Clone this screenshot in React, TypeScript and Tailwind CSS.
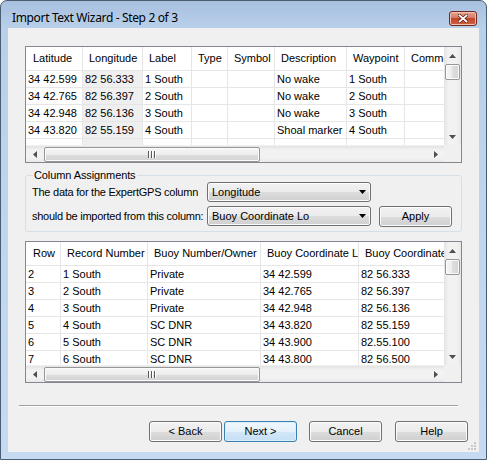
import React from 'react';

type Col = { label: string; w: string; shade?: boolean };

const topCols: Col[] = [
  { label: 'Latitude', w: 'w-[57px]' },
  { label: 'Longitude', w: 'w-[60px]', shade: true },
  { label: 'Label', w: 'w-[49px]' },
  { label: 'Type', w: 'w-[36px]' },
  { label: 'Symbol', w: 'w-[47px]' },
  { label: 'Description', w: 'w-[72px]' },
  { label: 'Waypoint', w: 'w-[58px]' },
  { label: 'Comment', w: 'w-[80px]' },
];

const topRows = [
  ['34 42.599', '82 56.333', '1 South', '', '', 'No wake', '1 South', ''],
  ['34 42.765', '82 56.397', '2 South', '', '', 'No wake', '2 South', ''],
  ['34 42.948', '82 56.136', '3 South', '', '', 'No wake', '3 South', ''],
  ['34 43.820', '82 55.159', '4 South', '', '', 'Shoal marker', '4 South', ''],
  ['', '', '', '', '', '', '', ''],
];

const bottomCols: Col[] = [
  { label: 'Row', w: 'w-[35px]' },
  { label: 'Record Number', w: 'w-[87px]' },
  { label: 'Buoy Number/Owner', w: 'w-[113px]' },
  { label: 'Buoy Coordinate Lat', w: 'w-[98px]' },
  { label: 'Buoy Coordinate Lon', w: 'w-[110px]' },
];

const bottomRows = [
  ['2', '1 South', 'Private', '34 42.599', '82 56.333'],
  ['3', '2 South', 'Private', '34 42.765', '82 56.397'],
  ['4', '3 South', 'Private', '34 42.948', '82 56.136'],
  ['5', '4 South', 'SC DNR', '34 43.820', '82 55.159'],
  ['6', '5 South', 'SC DNR', '34 43.900', '82.55.100'],
  ['7', '6 South', 'SC DNR', '34 43.800', '82 56.500'],
];

function VScroll() {
  return (
    <div className="flex w-[17px] shrink-0 flex-col bg-[linear-gradient(90deg,#e3e3e3,#f2f2f2_25%,#f2f2f2_75%,#e8e8e8)]">
      <div className="flex h-[17px] items-center justify-center">
        <svg width="7" height="4" viewBox="0 0 7 4">
          <path d="M0 4L3.5 0L7 4Z" fill="#4f4f4f" />
        </svg>
      </div>
      <div className="mx-auto h-[16px] w-[15px] rounded-[2px] border border-[#979797] bg-[linear-gradient(90deg,#f6f6f6,#ececec_50%,#dedede_50%,#d4d4d4)] shadow-[inset_0_0_0_1px_#fbfbfb]" />
      <div className="flex-1" />
      <div className="flex h-[17px] items-center justify-center">
        <svg width="7" height="4" viewBox="0 0 7 4">
          <path d="M0 0H7L3.5 4Z" fill="#4f4f4f" />
        </svg>
      </div>
    </div>
  );
}

function HScroll() {
  return (
    <div className="flex flex-1 bg-[linear-gradient(#e3e3e3,#f2f2f2_25%,#f2f2f2_75%,#e8e8e8)]">
      <div className="flex w-[17px] items-center justify-center">
        <svg width="4" height="7" viewBox="0 0 4 7">
          <path d="M4 0V7L0 3.5Z" fill="#4f4f4f" />
        </svg>
      </div>
      <div className="my-auto ml-[1px] flex h-[15px] w-[216px] items-center justify-center rounded-[2px] border border-[#979797] bg-[linear-gradient(#f6f6f6,#ececec_50%,#dedede_50%,#d4d4d4)] shadow-[inset_0_0_0_1px_#fbfbfb]">
        <svg width="8" height="7" viewBox="0 0 8 7">
          <rect x="0" y="0" width="2" height="7" fill="#5a5a5a" />
          <rect x="3" y="0" width="2" height="7" fill="#5a5a5a" />
          <rect x="6" y="0" width="2" height="7" fill="#5a5a5a" />
          <rect x="1" y="0" width="1" height="7" fill="#ffffff" />
          <rect x="4" y="0" width="1" height="7" fill="#ffffff" />
          <rect x="7" y="0" width="1" height="7" fill="#ffffff" />
        </svg>
      </div>
      <div className="flex-1" />
      <div className="flex w-[17px] items-center justify-center">
        <svg width="4" height="7" viewBox="0 0 4 7">
          <path d="M0 0V7L4 3.5Z" fill="#4f4f4f" />
        </svg>
      </div>
    </div>
  );
}

function DataGrid({ cols, rows, bodyH }: { cols: Col[]; rows: string[][]; bodyH: string }) {
  return (
    <div className="flex flex-col border border-[#828790] bg-white">
      <div className="flex">
        <div className="min-w-0 flex-1 overflow-hidden">
          <div className="flex h-[24px] border-b border-[#e5e5e5]">
            {cols.map((c, i) => (
              <div
                key={c.label}
                className={`${c.w} flex shrink-0 items-center overflow-hidden whitespace-nowrap border-r border-[#e5e5e5] ${i === 0 ? 'pl-[7px]' : 'pl-[6px]'}`}
              >
                {c.label}
              </div>
            ))}
          </div>
          <div className={`${bodyH} overflow-hidden`}>
            {rows.map((r, ri) => (
              <div key={ri} className="flex h-[17px]">
                {cols.map((c, ci) => (
                  <div
                    key={ci}
                    className={`${c.w} shrink-0 overflow-hidden whitespace-nowrap border-b border-r border-[#e6e6e6] pl-[2px] leading-[17px] ${c.shade ? 'bg-[#efefef]' : ''}`}
                  >
                    {r[ci]}
                  </div>
                ))}
              </div>
            ))}
          </div>
        </div>
        <VScroll />
      </div>
      <div className="flex h-[17px] border-t border-[#f0f0f0]">
        <HScroll />
        <div className="w-[17px] bg-[#f0f0f0]" />
      </div>
    </div>
  );
}

function Combo({ value }: { value: string }) {
  return (
    <div className="flex h-[20px] w-[164px] items-center justify-between rounded-[3px] border border-[#707070] bg-[linear-gradient(#f2f2f2,#ebebeb_50%,#dddddd_50%,#cfcfcf)] pl-[4px] pr-[4px] shadow-[inset_0_0_0_1px_#fcfcfc]">
      <span>{value}</span>
      <svg width="7" height="4" viewBox="0 0 7 4">
        <path d="M0 0H7L3.5 4Z" fill="#000" />
      </svg>
    </div>
  );
}

function Btn({ label, primary, className }: { label: string; primary?: boolean; className?: string }) {
  return (
    <div
      className={`flex h-[21px] w-[73px] items-center justify-center rounded-[3px] border ${
        primary
          ? 'border-[#3c7fb1] bg-[linear-gradient(#f1f8fd,#e4f1fb_50%,#d3e8f8_50%,#c4dff4)] shadow-[inset_0_0_0_1px_#d8f0fc]'
          : 'border-[#707070] bg-[linear-gradient(#f2f2f2,#ebebeb_50%,#dddddd_50%,#cfcfcf)] shadow-[inset_0_0_0_1px_#fcfcfc]'
      } ${className ?? ''}`}
    >
      {label}
    </div>
  );
}

export default function App() {
  return (
    <div className="flex h-[460px] w-[487px] flex-col rounded-t-[7px] border border-[#4a5d73] bg-[linear-gradient(#a7c0df,#b9d0ea_27px,#c1d7ee_60%,#c6dbf1)] font-['Liberation_Sans',Arial,sans-serif] text-[11px] text-black">
      <div className="flex h-[27px] shrink-0 items-start justify-between">
        <div className="pl-[11px] pt-[9px] font-['Noto_Sans','Open_Sans',sans-serif] text-[12px] leading-[15px] tracking-[-0.35px]">
          Import Text Wizard - Step 2 of 3
        </div>
        <div className="mr-[9px] mt-[10px] flex h-[15px] w-[28px] items-center justify-center rounded-[3px] border border-[#6d2a1f] bg-[linear-gradient(#e5a592,#d47a63_45%,#c2452b_50%,#d0623f)] shadow-[inset_0_0_0_1px_#f0c0b0]">
          <svg width="10" height="9" viewBox="0 0 10 9">
            <path d="M1.5 1.5L8.5 7.5M8.5 1.5L1.5 7.5" stroke="#5a1a10" strokeWidth="3.2" strokeLinecap="square" />
            <path d="M1.5 1.5L8.5 7.5M8.5 1.5L1.5 7.5" stroke="#ffffff" strokeWidth="1.8" strokeLinecap="square" />
          </svg>
        </div>
      </div>

      <div className="relative mx-[7px] mb-[7px] flex flex-1 flex-col bg-[#f0f0f0]">
        <div className="mx-[17px] mt-[18px]">
          <DataGrid cols={topCols} rows={topRows} bodyH="h-[74px]" />
        </div>

        <fieldset className="mx-[17px] mt-[6px] rounded-[3px] border border-[#d5dfe5] px-[6px] pb-[4px]">
          <legend className="ml-[1px] px-[1px] leading-[13px] tracking-[-0.1px]">Column Assignments</legend>
          <div className="flex h-[20px] items-center">
            <div className="w-[175px] whitespace-nowrap tracking-[-0.25px]">The data for the ExpertGPS column</div>
            <Combo value="Longitude" />
          </div>
          <div className="mt-[3px] flex h-[22px] items-center">
            <div className="w-[175px] whitespace-nowrap tracking-[-0.25px]">should be imported from this column:</div>
            <Combo value="Buoy Coordinate Lo" />
            <Btn label="Apply" className="ml-[8px]" />
          </div>
        </fieldset>

        <div className="mx-[17px] mt-[9px]">
          <DataGrid cols={bottomCols} rows={bottomRows} bodyH="h-[99px]" />
        </div>

        <div className="ml-[11px] mt-[22px] w-[439px] border-b border-t border-b-white border-t-[#a0a0a0]" />

        <div className="mt-[14px] flex pl-[141px]">
          <Btn label="< Back" />
          <Btn label="Next >" primary className="ml-[2px]" />
          <Btn label="Cancel" className="ml-[12px]" />
          <Btn label="Help" className="ml-[13px]" />
        </div>

        <svg className="absolute bottom-[1px] right-[2px]" width="10" height="10" viewBox="0 0 10 10">
          <rect x="7" y="1" width="2" height="2" fill="#c8c8c8" />
          <rect x="4" y="4" width="2" height="2" fill="#c8c8c8" />
          <rect x="7" y="4" width="2" height="2" fill="#c8c8c8" />
          <rect x="1" y="7" width="2" height="2" fill="#c8c8c8" />
          <rect x="4" y="7" width="2" height="2" fill="#c8c8c8" />
          <rect x="7" y="7" width="2" height="2" fill="#c8c8c8" />
        </svg>
      </div>
    </div>
  );
}
